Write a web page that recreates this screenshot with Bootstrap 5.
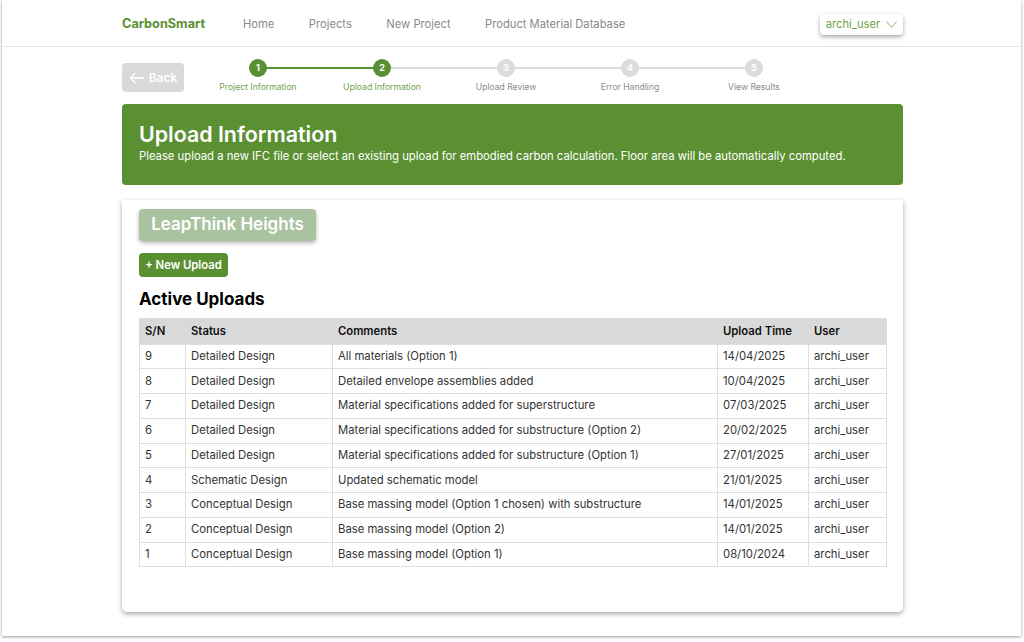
<!DOCTYPE html>
<html lang="en">
<head>
    <meta charset="UTF-8" />
    <title>CarbonSmart - Upload Information</title>
    <meta name="viewport" content="width=device-width, initial-scale=1" />
    <link href="https://cdn.jsdelivr.net/npm/bootstrap@5.3.2/dist/css/bootstrap.min.css" rel="stylesheet" />
    <style>
        html, body { height: 100%; overflow: hidden; }
        body { background: #fff; font-family: Inter, "Liberation Sans", sans-serif; color: #111; }

        .app-frame { width: 1019px; height: 636px; margin-left: 2px; background: #fff; box-shadow: 0 1px 3px rgba(0,0,0,.4); }
        .app-inner { width: 781px; margin-left: 120px; }

        .top-bar { height: 47px; padding-top: 2px; border-bottom: 1px solid #e3e5f0; }
        .brand-name { color: #5a9032; font-weight: 700; font-size: 12.7px; width: 121px; }
        .top-link { color: #8a8a8a; font-size: 11.2px; text-decoration: none; margin-right: 34.5px; }
        .user-menu { color: #6fa34c; font-size: 11.2px; width: 83px; height: 21px; border-radius: 4px; box-shadow: 0 2px 4px rgba(0,0,0,.35); gap: 6px; }

        .step-row { height: 45px; padding-top: 16px; }
        .back-btn { width: 62px; height: 29px; background: #d9d9d9; color: #fff; font-size: 12px; font-weight: 600; border-radius: 4px; margin-right: 12px; }
        .step-list { margin-top: -4px; }
        .step-item { width: 124px; }
        .step-dot { width: 18px; height: 18px; border-radius: 50%; background: #dcdcdc; color: #fff; font-size: 9px; font-weight: 700; z-index: 1; }
        .step-line { height: 2px; background: #dcdcdc; width: 124px; left: 62px; top: 8px; }
        .step-text { font-size: 8.6px; color: #8a8a8a; margin-top: 5px; line-height: 11px; }
        .step-done .step-dot { background: #5a9032; }
        .step-done .step-text { color: #6fa34c; }
        .step-line.line-done { background: #5a9032; }

        .info-banner { height: 81px; margin-top: 12px; background: #5a9032; color: #fff; border-radius: 4px; padding: 17px 17px 0; }
        .info-banner h1 { font-size: 21.4px; font-weight: 600; line-height: 26px; margin: 0 0 2px; }
        .info-banner p { font-size: 11.27px; line-height: 14px; margin: 0; }

        .upload-panel { height: 412px; margin-top: 15px; padding: 9px 16px 0 17px; border-radius: 0 0 5px 5px; box-shadow: 0 2px 5px rgba(0,0,0,.35); }
        .project-pill { width: 177px; height: 32px; background: #a9c2a0; color: #fff; font-size: 17px; font-weight: 600; border-radius: 4px; box-shadow: 0 2px 4px rgba(0,0,0,.3); }
        .new-upload { width: 89px; height: 24px; margin-top: 12px; padding: 0; background: #5a9032; border: 0; color: #fff; font-size: 11.3px; font-weight: 600; border-radius: 4px; }
        .uploads-title { font-size: 17px; font-weight: 700; line-height: 22px; margin: 11px 0 8px; color: #000; }

        .uploads-table { width: 748px; table-layout: fixed; font-size: 11.3px; margin: 0; border-color: #dedede; }
        .uploads-table th, .uploads-table td { padding: 0 0 0 5px; height: 24.75px; vertical-align: middle; color: #333; font-weight: 400; }
        .uploads-table thead th { height: 25.5px; background: #d9d9d9; color: #111; font-weight: 600; border-color: #d9d9d9; }
    </style>
</head>
<body>
    <div class="app-frame">
        <!-- Navbar -->
        <div class="top-bar">
            <div class="app-inner d-flex align-items-center h-100">
                <span class="brand-name">CarbonSmart</span>
                <a class="top-link" href="#">Home</a>
                <a class="top-link" href="#">Projects</a>
                <a class="top-link" href="#">New Project</a>
                <a class="top-link" href="#">Product Material Database</a>
                <div class="user-menu ms-auto d-flex align-items-center justify-content-center">
                    archi_user
                    <svg width="11" height="7" viewBox="0 0 11 7" fill="none" stroke="#6fa34c" stroke-width="0.8"><path d="M0.5 0.5L5.5 6.5L10.5 0.5" /></svg>
                </div>
            </div>
        </div>

        <div class="app-inner">
            <!-- Stepper -->
            <div class="step-row d-flex align-items-start">
                <div class="back-btn d-flex align-items-center justify-content-center gap-1">
                    <svg width="16" height="12" viewBox="0 0 16 12" fill="none" stroke="#fff" stroke-width="1.3"><path d="M15 6H1.5M6.5 1L1.5 6L6.5 11" /></svg>
                    Back
                </div>
                <div class="step-list d-flex" id="steps"></div>
            </div>

            <div class="info-banner">
                <h1>Upload Information</h1>
                <p>Please upload a new IFC file or select an existing upload for embodied carbon calculation. Floor area will be automatically computed.</p>
            </div>

            <div class="upload-panel">
                <div class="project-pill d-flex align-items-center justify-content-center">LeapThink Heights</div>
                <button class="new-upload btn d-block">+ New Upload</button>
                <h2 class="uploads-title">Active Uploads</h2>
                <table class="table table-bordered uploads-table">
                    <colgroup>
                        <col style="width: 46px" /><col style="width: 147px" /><col style="width: 385px" /><col style="width: 91px" /><col style="width: 78px" />
                    </colgroup>
                    <thead>
                        <tr><th>S/N</th><th>Status</th><th>Comments</th><th>Upload Time</th><th>User</th></tr>
                    </thead>
                    <tbody id="uploadRows"></tbody>
                </table>
            </div>
        </div>
    </div>

    <script>
        const steps = ["Project Information", "Upload Information", "Upload Review", "Error Handling", "View Results"];
        document.getElementById("steps").innerHTML = steps.map((label, i) => `
            <div class="step-item position-relative d-flex flex-column align-items-center ${i < 2 ? "step-done" : ""}">
                ${i < 4 ? `<div class="step-line position-absolute ${i === 0 ? "line-done" : ""}"></div>` : ""}
                <div class="step-dot d-flex align-items-center justify-content-center">${i + 1}</div>
                <div class="step-text">${label}</div>
            </div>`).join("");

        const uploads = [
            [9, "Detailed Design", "All materials (Option 1)", "14/04/2025"],
            [8, "Detailed Design", "Detailed envelope assemblies added", "10/04/2025"],
            [7, "Detailed Design", "Material specifications added for superstructure", "07/03/2025"],
            [6, "Detailed Design", "Material specifications added for substructure (Option 2)", "20/02/2025"],
            [5, "Detailed Design", "Material specifications added for substructure (Option 1)", "27/01/2025"],
            [4, "Schematic Design", "Updated schematic model", "21/01/2025"],
            [3, "Conceptual Design", "Base massing model (Option 1 chosen) with substructure", "14/01/2025"],
            [2, "Conceptual Design", "Base massing model (Option 2)", "14/01/2025"],
            [1, "Conceptual Design", "Base massing model (Option 1)", "08/10/2024"]
        ];
        document.getElementById("uploadRows").innerHTML = uploads.map(u =>
            `<tr><td>${u[0]}</td><td>${u[1]}</td><td>${u[2]}</td><td>${u[3]}</td><td>archi_user</td></tr>`).join("");
    </script>

    <script src="https://cdn.jsdelivr.net/npm/bootstrap@5.3.2/dist/js/bootstrap.bundle.min.js"></script>
</body>
</html>
